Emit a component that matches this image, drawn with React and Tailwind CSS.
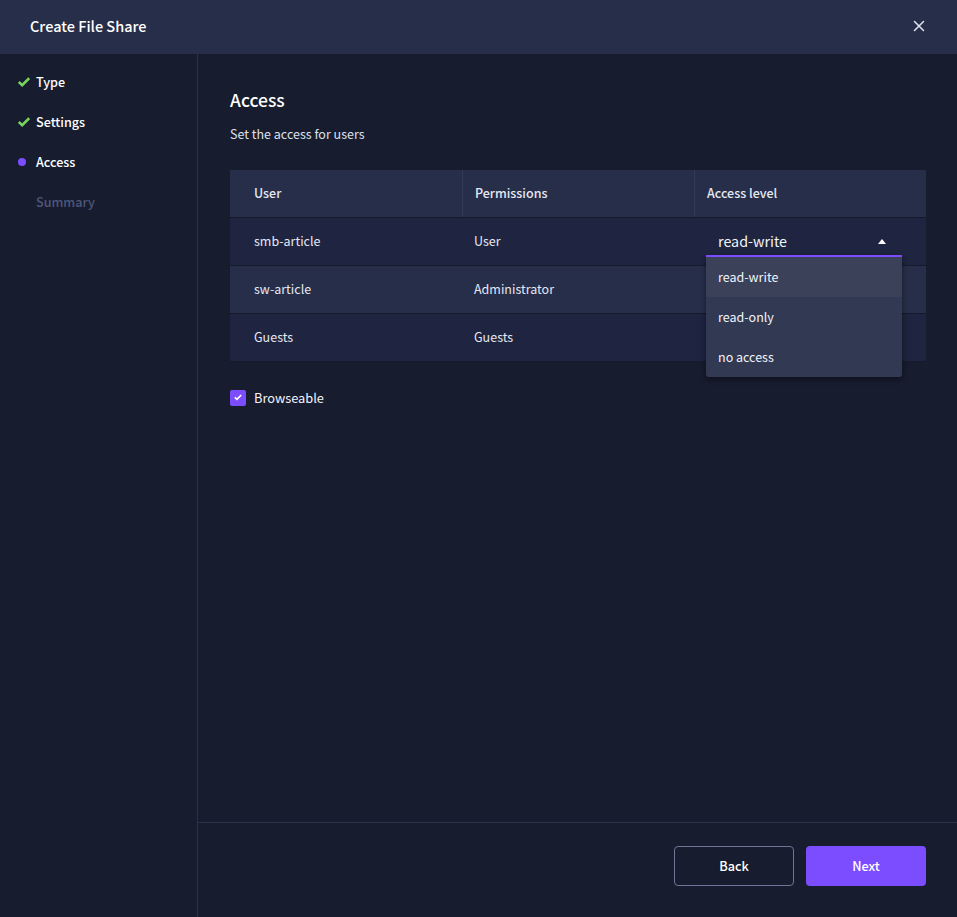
import { X } from 'lucide-react';

const steps = [
  { label: 'Type', state: 'done' },
  { label: 'Settings', state: 'done' },
  { label: 'Access', state: 'current' },
  { label: 'Summary', state: 'todo' },
];

const rows = [
  { user: 'smb-article', permissions: 'User', bg: 'bg-[#1f2440]' },
  { user: 'sw-article', permissions: 'Administrator', bg: 'bg-[#272e49]' },
  { user: 'Guests', permissions: 'Guests', bg: 'bg-[#1f2440]' },
];

function StepItem({ step }) {
  return (
    <div className="flex items-center h-10">
      <div className="w-[36px] pl-[18px] flex items-center shrink-0">
        {step.state === 'done' && (
          <svg width="12" height="10" viewBox="0 0 12 10" fill="none">
            <path d="M0.8 5 L4.2 8.2 L11.2 1.2" stroke="#76d65c" strokeWidth="2.6" />
          </svg>
        )}
        {step.state === 'current' && <div className="w-2 h-2 rounded-full bg-[#7c4dff]" />}
      </div>
      <span className={`text-[12.6px] font-medium ${step.state === 'todo' ? 'text-[#4f5778]' : 'text-white'}`}>
        {step.label}
      </span>
    </div>
  );
}

function AccessDropdown() {
  return (
    <div className="absolute left-[12px] top-[37px] w-[196px] z-10 rounded-b-[3px] bg-[#323953] border-t-2 border-[#7c4dff] shadow-[0_2px_6px_rgba(0,0,0,0.45)] text-[12.5px] text-[#f2f4fa] overflow-hidden">
      <div className="h-10 pl-3 flex items-center bg-[#3a4159]">read-write</div>
      <div className="h-10 pl-3 flex items-center">read-only</div>
      <div className="h-10 pl-3 flex items-center">no access</div>
    </div>
  );
}

export default function App() {
  return (
    <div
      className="w-[957px] h-[917px] flex flex-col bg-[#171c2f] text-white overflow-hidden"
      style={{ fontFamily: '"Noto Sans CJK SC", "Noto Sans", sans-serif' }}
    >
      {/* Header */}
      <div className="h-[54px] shrink-0 flex items-center justify-between pl-[30px] pr-[29px] pb-[2px] bg-[#272e49]">
        <h1 className="text-[14.5px] font-medium">Create File Share</h1>
        <X size={18} strokeWidth={2} className="text-[#dfe3ee]" />
      </div>

      <div className="flex-1 flex min-h-0">
        {/* Steps */}
        <div className="w-[198px] shrink-0 border-r border-[#2a3048] pt-[8px]">
          {steps.map(s => <StepItem key={s.label} step={s} />)}
        </div>

        <div className="flex-1 flex flex-col min-w-0">
          <div className="flex-1 pl-[32px] pr-[31px] pt-[34px]">
            <h2 className="text-[17.5px] font-medium leading-6">Access</h2>
            <p className="mt-[12px] text-[12.5px] leading-5 text-[#dde1ec]">Set the access for users</p>

            {/* Table */}
            <div className="mt-[26px] text-[12.5px]">
              <div className="grid grid-cols-[233px_232px_231px] h-[48px] bg-[#272e49] border-b border-[#151a2b] font-medium text-[#e4e8f2]">
                <div className="pl-6 flex items-center border-r border-[#333a56]">User</div>
                <div className="pl-3 flex items-center border-r border-[#333a56]">Permissions</div>
                <div className="pl-3 flex items-center">Access level</div>
              </div>
              {rows.map((r, i) => (
                <div key={r.user} className={`grid grid-cols-[232px_232px_232px] h-[48px] border-b border-[#151a2b] text-[#e4e8f2] ${r.bg}`}>
                  <div className="pl-6 flex items-center">{r.user}</div>
                  <div className="pl-3 flex items-center">{r.permissions}</div>
                  <div className="relative">
                    {i === 0 && (
                      <>
                        <div className="pl-6 pr-[40px] h-full flex items-center justify-between text-[14.3px] text-[#f2f4fa]">
                          <span className="-translate-y-px">read-write</span>
                          <div className="w-0 h-0 border-x-[4.5px] border-x-transparent border-b-[5px] border-b-white" />
                        </div>
                        <AccessDropdown />
                      </>
                    )}
                  </div>
                </div>
              ))}
            </div>

            {/* Browseable */}
            <div className="mt-[26px] flex items-center gap-2">
              <div className="w-4 h-4 rounded-[2px] bg-[#7c4dff] flex items-center justify-center">
                <svg width="8" height="7" viewBox="0 0 8 7" fill="none">
                  <path d="M0.8 3.4 L3 5.4 L7.2 1" stroke="white" strokeWidth="1.7" />
                </svg>
              </div>
              <span className="text-[12.8px] text-[#f2f4fa]">Browseable</span>
            </div>
          </div>

          {/* Footer */}
          <div className="h-[95px] shrink-0 border-t border-[#2a3048] flex justify-end gap-3 pt-[23px] pr-[31px]">
            <button className="w-[120px] h-10 rounded-[4px] border border-[#6f7597] text-[12.7px] font-medium">Back</button>
            <button className="w-[120px] h-10 rounded-[4px] bg-[#7c4dff] text-[12.7px] font-medium">Next</button>
          </div>
        </div>
      </div>
    </div>
  );
}
